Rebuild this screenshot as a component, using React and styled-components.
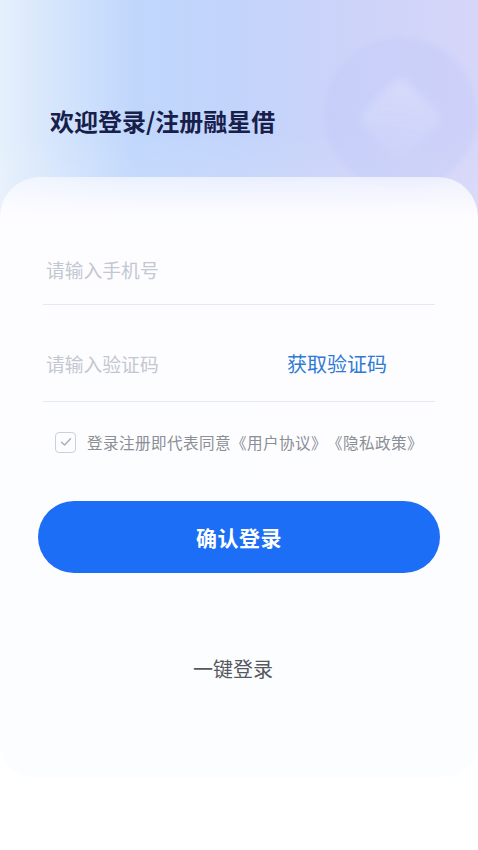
import React from 'react';
import styled, { createGlobalStyle } from 'styled-components';

const GlobalStyle = createGlobalStyle`
  html, body {
    margin: 0;
    padding: 0;
    background: #ffffff;
  }
  body {
    font-family: 'Noto Sans CJK SC', 'Noto Sans', sans-serif;
    text-spacing-trim: space-all;
  }
  * {
    box-sizing: border-box;
  }
`;

const Page = styled.div`
  position: relative;
  width: 478px;
  height: 850px;
  overflow: hidden;
  background: #ffffff;
`;

const Hero = styled.div`
  position: relative;
  height: 220px;
  padding: 97px 0 0 50px;
  background:
    linear-gradient(180deg, rgba(255, 255, 255, 0) 60%, rgba(255, 255, 255, 0.15) 100%),
    linear-gradient(90deg, #e6f0fc 0%, #d2e3fc 14%, #c0d7fc 28%, #c3d4fb 50%, #ccd3f9 72%, #d6d6f9 100%);
`;

const Deco = styled.div`
  position: absolute;
  left: 325px;
  top: 38px;
  width: 152px;
  height: 152px;
  border-radius: 50%;
  background: rgba(192, 200, 248, 0.35);
  filter: blur(2px);

  &::after {
    content: '';
    position: absolute;
    left: 44px;
    top: 50px;
    width: 62px;
    height: 62px;
    border-radius: 10px;
    transform: rotate(45deg);
    background: linear-gradient(135deg, rgba(226, 230, 252, 0.5) 0%, rgba(214, 220, 252, 0.1) 100%);
    filter: blur(3px);
  }
`;

const Title = styled.h1`
  position: relative;
  margin: 0;
  font-size: 24px;
  line-height: 48px;
  font-weight: 700;
  color: #17204a;
`;

const Card = styled.div`
  position: relative;
  margin-top: -43px;
  min-height: 600px;
  border-radius: 40px 40px 34px 34px;
  padding: 46px 43px 0 43px;
  background: linear-gradient(180deg, rgba(246, 248, 255, 0.75) 0px, #fdfdff 40px, #fcfdfe 100%);
`;

const Field = styled.div`
  display: flex;
  align-items: flex-end;
  justify-content: space-between;
  height: ${p => p.h}px;
  padding: 0 3px ${p => p.pb}px 3px;
  border-bottom: 1px solid #e6e8ed;
  line-height: 26px;
`;

const Placeholder = styled.span`
  font-size: 18.8px;
  color: #c3c7cf;
`;

const CodeLink = styled.span`
  margin-right: 45px;
  font-size: 20px;
  color: #2f79d6;
`;

const Agree = styled.label`
  display: flex;
  align-items: center;
  gap: 11px;
  margin: 29px 0 0 12px;
  font-size: 15.6px;
  letter-spacing: 0.4px;
  color: #8b8e95;
`;

const Check = styled.span`
  display: flex;
  align-items: center;
  justify-content: center;
  width: 21px;
  height: 21px;
  border: 1.5px solid #cdd0d6;
  border-radius: 4px;
`;

const Primary = styled.button`
  display: block;
  width: 402px;
  height: 72px;
  margin: 48px 0 0 -5px;
  border: none;
  border-radius: 36px;
  background: #1b6ef5;
  color: #ffffff;
  font-family: inherit;
  font-size: 21px;
  font-weight: 700;
  letter-spacing: 0.5px;
`;

const Secondary = styled.div`
  margin: 81px 0 0 -12px;
  text-align: center;
  font-size: 20px;
  color: #55585f;
`;

export default function App() {
  return (
    <Page>
      <GlobalStyle />
      <Hero>
        <Deco />
        <Title>欢迎登录/注册融星借</Title>
      </Hero>
      <Card>
        <Field h={82} pb={21}>
          <Placeholder>请输入手机号</Placeholder>
        </Field>
        <Field h={97} pb={24}>
          <Placeholder>请输入验证码</Placeholder>
          <CodeLink>获取验证码</CodeLink>
        </Field>
        <Agree>
          <Check>
            <svg width="12" height="10" viewBox="0 0 12 10" fill="none">
              <path d="M1.5 5.2 L4.6 8 L10.5 1.8" stroke="#a9adb5" strokeWidth="1.4" strokeLinecap="round" strokeLinejoin="round" />
            </svg>
          </Check>
          登录注册即代表同意《用户协议》《隐私政策》
        </Agree>
        <Primary>确认登录</Primary>
        <Secondary>一键登录</Secondary>
      </Card>
    </Page>
  );
}
